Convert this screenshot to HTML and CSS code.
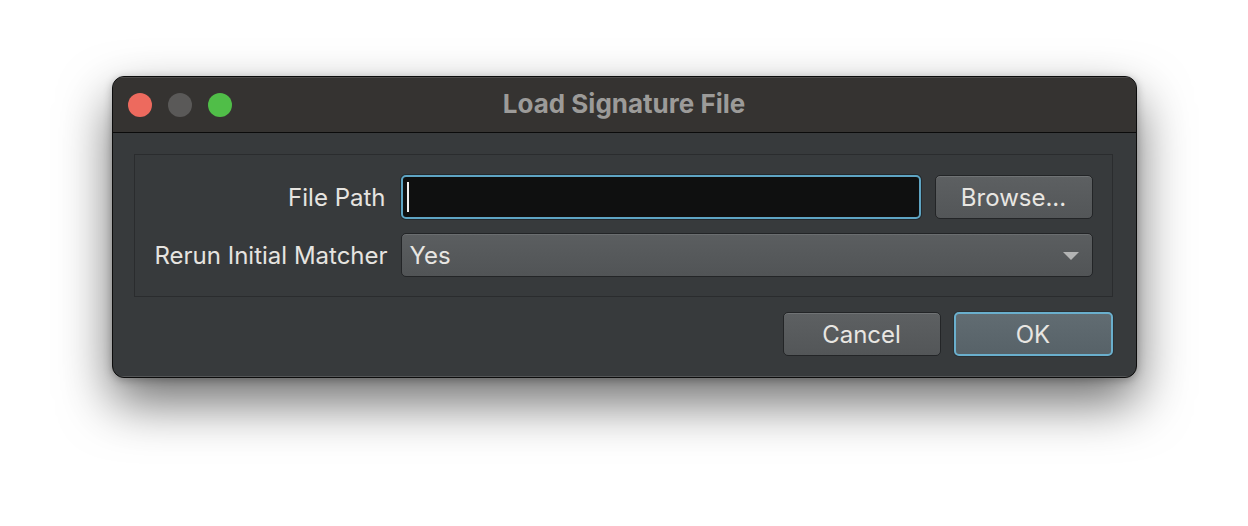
FILE: index.html
```html
<!DOCTYPE html>
<html>
<head>
<meta charset="utf-8">
<link rel="stylesheet" href="styles.css">
</head>
<body>
<div class="stage">
  <div class="window">
    <div class="titlebar">
      <div class="lights">
        <span class="light red"></span>
        <span class="light gray"></span>
        <span class="light green"></span>
      </div>
      <div class="title">Load Signature File</div>
    </div>
    <div class="content">
      <div class="group">
        <label class="label">File Path</label>
        <div class="input"><span class="caret"></span></div>
        <button class="btn browse">Browse...</button>
        <label class="label">Rerun Initial Matcher</label>
        <div class="combo">
          <span>Yes</span>
          <svg class="arrow" width="16" height="8" viewBox="0 0 16 8"><path d="M0 0 H16 L8 8 Z" fill="#b3b4b4"/></svg>
        </div>
      </div>
      <div class="actions">
        <button class="btn">Cancel</button>
        <button class="btn default">OK</button>
      </div>
    </div>
  </div>
</div>
</body>
</html>
```
FILE: styles.css
```css
html, body {
  margin: 0;
  padding: 0;
  background: #ffffff;
}
body {
  width: 1248px;
  height: 526px;
  overflow: hidden;
  font-family: "Inter", "Noto Sans", sans-serif;
}
.stage {
  display: flex;
  justify-content: center;
  padding-top: 76px;
}
.window {
  width: 1023px;
  border: 1px solid #0c0c0c;
  border-radius: 12px;
  overflow: hidden;
  background: #373a3c;
  box-shadow: 0 24px 52px rgba(0, 0, 0, 0.58), 0 2px 8px rgba(0,0,0,0.25);
}
.titlebar {
  position: relative;
  height: 55px;
  background: #353331;
  border-bottom: 1px solid #0b0b0b;
  display: flex;
  align-items: center;
  box-shadow: inset 0 1px 0 rgba(255,255,255,0.12);
}
.lights {
  display: flex;
  gap: 16px;
  padding-left: 15px;
}
.light {
  width: 24px;
  height: 24px;
  border-radius: 50%;
  display: block;
}
.red { background: #ed6a5e; }
.gray { background: #5a5958; }
.green { background: #50be48; }
.title {
  position: absolute;
  left: 0;
  right: 0;
  top: 0;
  bottom: 0;
  display: flex;
  align-items: center;
  justify-content: center;
  color: #9c9b99;
  font-weight: 700;
  font-size: 26px;
  padding-bottom: 2px;
}
.content {
  padding: 21px 23px 21px 21px;
  display: flex;
  flex-direction: column;
  gap: 15px;
  box-shadow: inset 0 -1px 0 rgba(255,255,255,0.14);
}
.group {
  border: 1px solid #2a2c2e;
  box-sizing: border-box;
  height: 143px;
  padding: 20px 19px 0 20px;
  display: grid;
  grid-template-columns: 232px 1fr 158px;
  grid-template-rows: 44px 44px;
  column-gap: 14px;
  row-gap: 14px;
  align-items: center;
}
.label {
  color: #e6e4e0;
  font-size: 24px;
  text-align: right;
  padding-right: 1px;
  white-space: nowrap;
}
.input {
  height: 44px;
  box-sizing: border-box;
  background: #0f1010;
  border: 2px solid #5ea4c3;
  border-radius: 5px;
  box-shadow: 0 0 0 1px #23292c;
  display: flex;
  align-items: center;
  padding-left: 4px;
}
.caret {
  width: 2px;
  height: 30px;
  background: #f0f0f0;
}
.btn {
  font-family: inherit;
  font-size: 24px;
  color: #e8e6e2;
  height: 44px;
  box-sizing: border-box;
  border: 1px solid #232527;
  border-radius: 5px;
  background: linear-gradient(#5d6062, #535658);
  box-shadow: inset 0 1px 0 rgba(255,255,255,0.12);
  padding: 0;
  margin: 0;
}
.combo {
  grid-column: 2 / 4;
  height: 44px;
  box-sizing: border-box;
  border: 1px solid #232527;
  border-radius: 5px;
  background: linear-gradient(#5b5e60, #515456);
  box-shadow: inset 0 1px 0 rgba(255,255,255,0.10);
  display: flex;
  align-items: center;
  justify-content: space-between;
  padding: 0 13px 0 8px;
  color: #e8e6e2;
  font-size: 24px;
}
.arrow {
  display: block;
  margin-top: 1px;
}
.actions {
  display: flex;
  justify-content: flex-end;
  gap: 13px;
}
.actions .btn {
  width: 158px;
}
.btn.default {
  width: 159px;
  border: 2px solid #6aafcd;
  background: linear-gradient(#616c72, #576268);
  box-shadow: 0 0 0 1px #2b3134;
}
```
